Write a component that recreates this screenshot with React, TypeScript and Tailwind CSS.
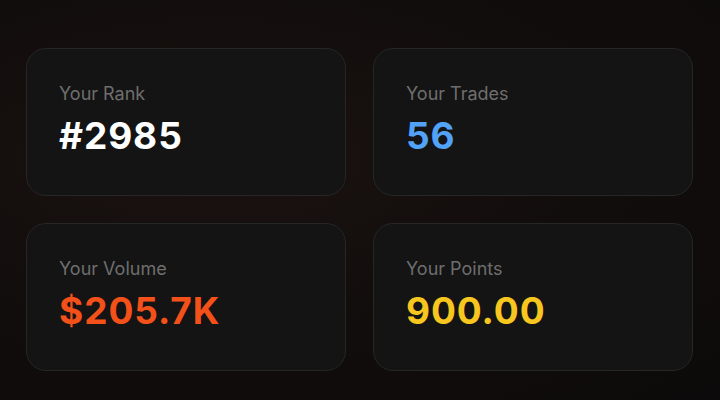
import React from 'react';

const stats = [
  { label: 'Your Rank', value: '#2985', color: 'text-white' },
  { label: 'Your Trades', value: '56', color: 'text-[#52a2f8]' },
  { label: 'Your Volume', value: '$205.7K', color: 'text-[#f4511a]' },
  { label: 'Your Points', value: '900.00', color: 'text-[#f7c61f]' },
];

export default function App() {
  return (
    <div
      className="w-[720px] h-[400px] overflow-hidden bg-[radial-gradient(ellipse_at_30%_40%,#1a1210_0%,#110d0c_55%,#0c0a0a_100%)] pl-[26px] pr-[27px] pt-[48px]"
      style={{ fontFamily: 'Inter, "Noto Sans", sans-serif' }}
    >
      <div className="grid grid-cols-2 gap-x-[27px] gap-y-[27px]">
        {stats.map((s) => (
          <div
            key={s.label}
            className="h-[148px] rounded-[20px] border border-[#262626] bg-[#141414] px-[32px] pt-[32px]"
          >
            <div className="text-[18px] leading-[26px] text-[#6e6e6e]">{s.label}</div>
            <div className={`mt-[6px] text-[37px] leading-[46px] font-bold tracking-[0.025em] ${s.color}`}>
              {s.value}
            </div>
          </div>
        ))}
      </div>
    </div>
  );
}
